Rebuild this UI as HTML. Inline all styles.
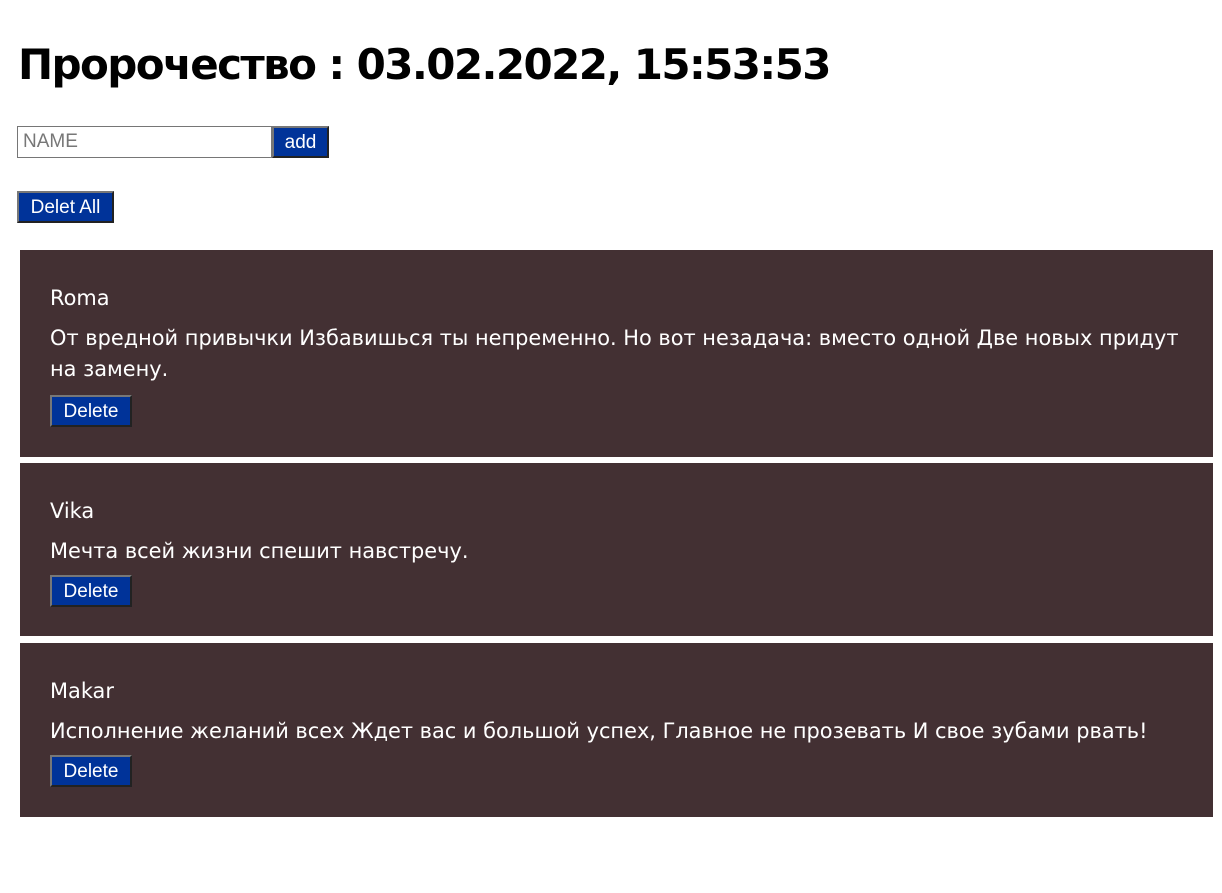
<!DOCTYPE html>
<html><head><meta charset="utf-8"><style>
body{margin:0;background:#fff;font-family:"DejaVu Sans","Liberation Sans",sans-serif;}
h1{position:absolute;left:18px;top:37px;margin:0;font-size:42px;font-weight:bold;line-height:56px;letter-spacing:-1.6px;color:#000;}
.btn{position:absolute;background:#003399;color:#fff;font-family:"Liberation Sans",sans-serif;font-size:19px;border:2px solid;border-color:#777 #222 #222 #777;box-sizing:border-box;text-align:center;line-height:30px;}
input{position:absolute;left:17px;top:126px;width:255px;height:32px;box-sizing:border-box;border:1px solid #767676;font-family:"Liberation Sans",sans-serif;font-size:19px;padding:0 5px;}
input::placeholder{color:#777;}
.card{position:absolute;left:20px;width:1193px;background:#433033;color:#fff;}
.card .t{position:absolute;left:30px;font-size:20.9px;line-height:30px;white-space:nowrap;}
</style></head><body>
<h1>Пророчество : 03.02.2022, 15:53:53</h1>
<input placeholder="NAME">
<div class="btn" style="left:272px;top:126px;width:57px;height:32px;">add</div>
<div class="btn" style="left:17px;top:191px;width:97px;height:32px;">Delet All</div>

<div class="card" style="top:250px;height:207px;">
<div class="t" style="top:33px">Roma</div>
<div class="t" style="top:73px">От вредной привычки Избавишься ты непременно. Но вот незадача: вместо одной Две новых придут</div>
<div class="t" style="top:104px">на замену.</div>
<div class="btn" style="left:30px;top:145px;width:82px;height:32px;">Delete</div>
</div>
<div class="card" style="top:463px;height:173px;">
<div class="t" style="top:33px">Vika</div>
<div class="t" style="top:73px">Мечта всей жизни спешит навстречу.</div>
<div class="btn" style="left:30px;top:112px;width:82px;height:32px;">Delete</div>
</div>
<div class="card" style="top:643px;height:174px;">
<div class="t" style="top:33px">Makar</div>
<div class="t" style="top:73px">Исполнение желаний всех Ждет вас и большой успех, Главное не прозевать И свое зубами рвать!</div>
<div class="btn" style="left:30px;top:112px;width:82px;height:32px;">Delete</div>
</div>
</body></html>
